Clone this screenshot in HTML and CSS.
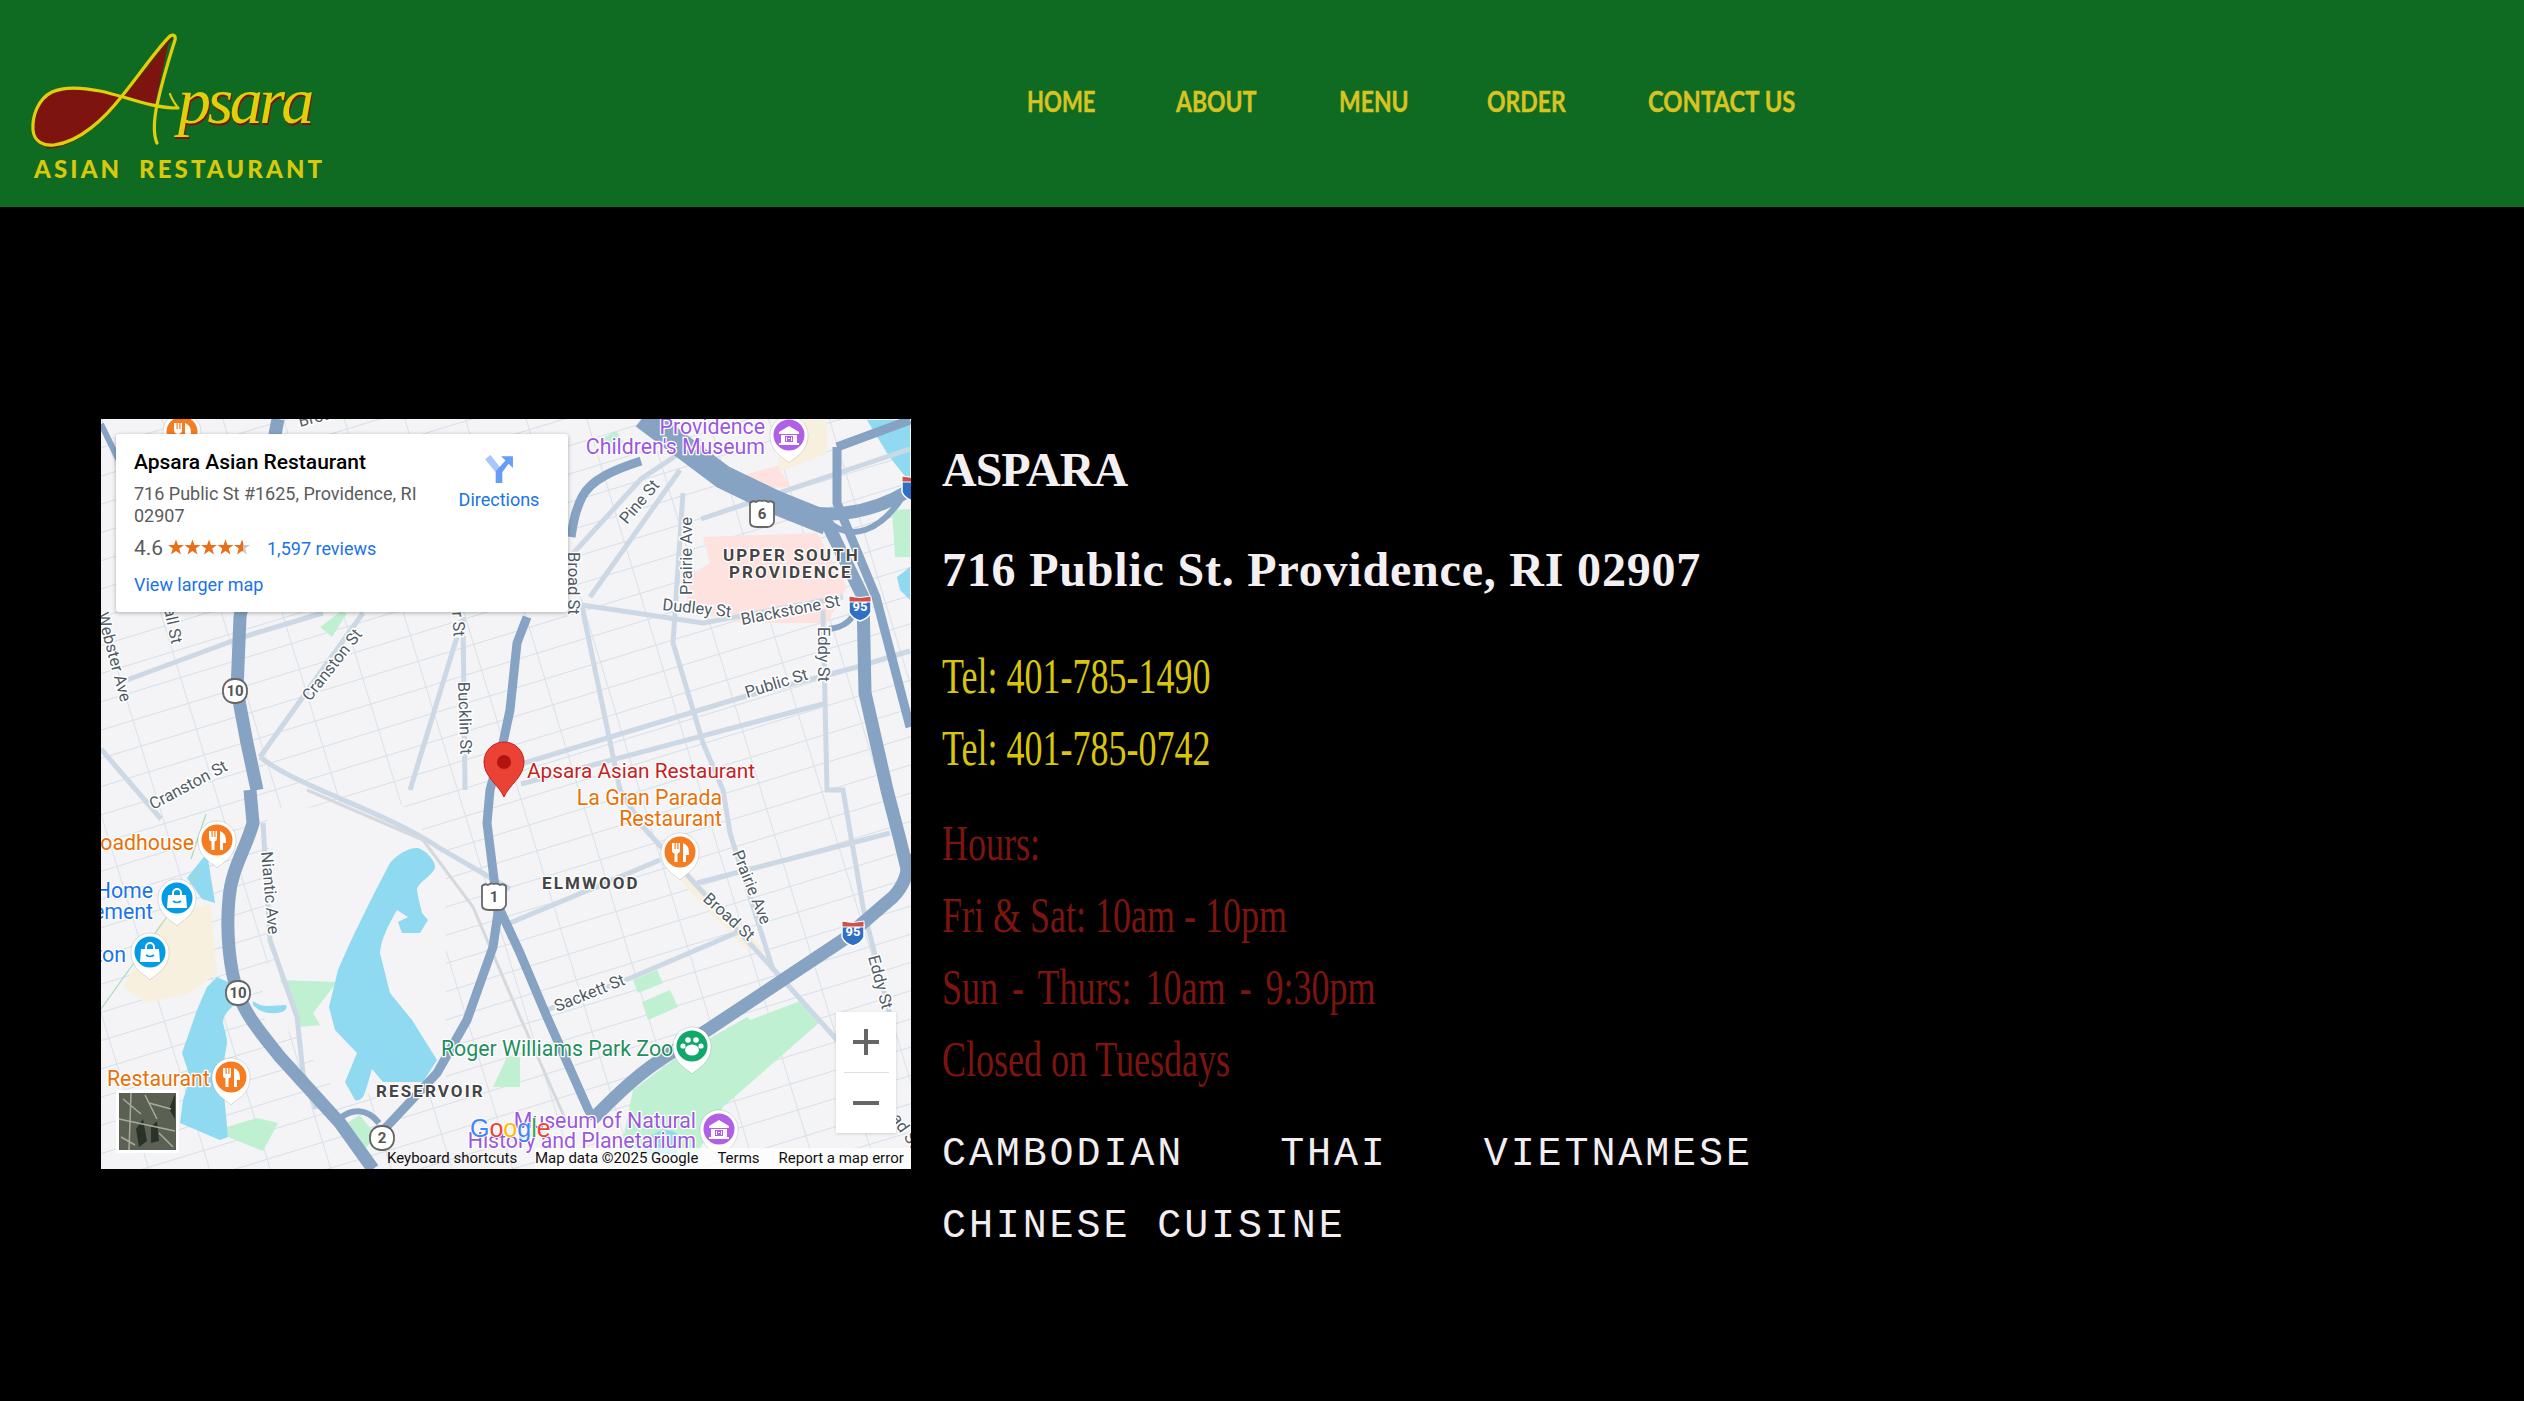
FILE: index.html
```html
<!DOCTYPE html>
<html lang="en">
<head>
<meta charset="utf-8">
<title>Apsara Asian Restaurant</title>
<link rel="stylesheet" href="styles.css">
</head>
<body>
<header class="site-header">
  <a class="logo" href="#" aria-label="Apsara Asian Restaurant">
    <svg class="logo-svg" viewBox="0 0 400 207" width="400" height="207">
      <path class="logo-fill" d="M122 95 C100 122 72 146 46 146 C36 146 32 136 33 124 C35 103 50 89 72 88 C90 87 106 91 122 95Z"/>
      <path class="logo-fill" d="M122 95 L170 36 L155 105Z"/>
      <path class="logo-shadow" d="M46 148 C72 148 100 124 123 97 L172 38"/>
      <path class="logo-line" d="M178 108 C150 108 125 96 100 91 C85 88 65 86 52 92 C38 99 32 116 33 130 C34 142 44 146 54 145 C80 142 105 118 122 96 C140 74 156 50 170 36 C174 34 176 36 175 40 C168 62 160 90 156 110 C154 122 153 134 157 143"/>
      <path class="logo-line thin" d="M170 94 C172 100 176 105 178 108"/>
      <text class="logo-word logo-word-shadow" x="179" y="125">psara</text>
      <text class="logo-word" x="178" y="123">psara</text>
      <text class="logo-sub" x="34" y="178">ASIAN</text>
      <text class="logo-sub" x="139" y="178">RESTAURANT</text>
    </svg>
  </a>
  <nav class="nav">
    <a class="nav-link" href="#"><span class="nav-text">HOME</span></a>
    <a class="nav-link" href="#"><span class="nav-text">ABOUT</span></a>
    <a class="nav-link" href="#"><span class="nav-text">MENU</span></a>
    <a class="nav-link" href="#"><span class="nav-text">ORDER</span></a>
    <a class="nav-link" href="#"><span class="nav-text">CONTACT US</span></a>
  </nav>
</header>

<main class="content">
  <section class="map">
    <svg class="map-svg" viewBox="0 0 810 750" width="810" height="750">
      <defs>
        <pattern id="streets" width="58" height="27" patternUnits="userSpaceOnUse" patternTransform="rotate(-17)">
          <path d="M0 0H58M0 0V27" class="minor"/>
        </pattern>
        <linearGradient id="halfstar"><stop offset="55%" stop-color="#e7711b"/><stop offset="55%" stop-color="#c8c8c8"/></linearGradient>
        <g id="fork">
          <path d="M-8 -9v7q0 3 2.500 3.500V10h3V1.500Q0 1 0 -2v-7h-1.500v6h-1.200v-6h-1.600v6h-1.200v-6Z" fill="#fff"/>
          <path d="M3 10V-9q6 2 6 10v2H6v7Z" fill="#fff"/>
        </g>
        <g id="bag">
          <path d="M-9 -3H9L10 10H-10Z" fill="#fff"/>
          <path d="M-4 -3v-2a4 4 0 0 1 8 0v2" fill="none" stroke="#fff" stroke-width="2"/>
          <path d="M-4 3q4 3 8 0" fill="none" stroke="#039be5" stroke-width="1.600"/>
        </g>
        <g id="mus">
          <path d="M-10 -3L0 -9L10 -3V-1H-10ZM-8 0h16v8h2v2h-20v-2h2Z" fill="#fff"/>
          <path d="M-4 1h8v6h-8Z" fill="#b25fe8"/>
          <path d="M-3 2h1v4h-1ZM2 2h1v4h-1ZM-1 3h2v1h-2Z" fill="#fff"/>
        </g>
        <g id="paw">
          <ellipse cx="0" cy="4" rx="7" ry="5.500" fill="#fff"/>
          <circle cx="-9" cy="0" r="2.600" fill="#fff"/><circle cx="9" cy="0" r="2.600" fill="#fff"/>
          <circle cx="-4" cy="-6" r="2.800" fill="#fff"/><circle cx="4" cy="-6" r="2.800" fill="#fff"/>
        </g>
        <path id="pinbase" class="pin-white" d="M0 28C-4 23 -19 18 -19 0A19 19 0 0 1 19 0C19 18 4 23 0 28Z"/>
        <g id="shield"><rect x="-12" y="-12" width="24" height="24" rx="11" class="shield"/></g>
        <path id="ushield" class="shield" d="M-12 -11q3 -3 6 -1q3 -2 6 -1q3 -1 6 1q3 -2 6 1V8q-2 5 -7 5H-5q-7 0 -7 -5Z"/>
        <g id="interstate">
          <path d="M-11 -7H11V5Q9 11 0 14Q-9 11 -11 5Z" fill="#2f6fc4" stroke="#fff" stroke-width="1.500"/>
          <path d="M-11 -11Q0 -8 11 -11V-5H-11Z" fill="#d1504b" stroke="#fff" stroke-width="1"/>
        </g>
      </defs>

      <rect width="810" height="750" class="land"/>
      <rect width="810" height="750" fill="url(#streets)"/>
      <path class="land" d="M165 390L300 385L345 440L345 660L240 680L190 610L175 520Z"/>
      <path class="land" d="M160 545L225 545L225 600L165 620Z"/>

      <path class="tan" d="M109 484L116 554L89 574L46 584L22 568L59 504Z"/>
      <path class="tan" d="M682 1H726V34L676 54Z"/>
      <path class="tan" d="M569 451L585 450L666 534L642 528Z"/>
      <path class="pink" d="M602 118L716 114L746 168L726 204L642 204L586 191V158L609 144Z"/>
      <path class="pink" d="M646 55L676 47L690 68L650 70Z"/>

      <path class="park" d="M179 561L236 563L212 594L219 606L197 608L189 578Z"/>
      <path class="park" d="M126 708L156 699L177 704L162 732L127 718Z"/>
      <path class="park" d="M246 704L259 696L276 718L262 731Z"/>
      <path class="park" d="M576 638L646 598L649 601L702 581L719 603L622 688L596 735H519L532 671Z"/>
      <path class="park" d="M532 561L556 551L562 564L537 574Z"/>
      <path class="park" d="M541 583L569 571L577 588L547 601Z"/>
      <path class="park" d="M406 638H419V668H392Z"/>
      <path class="park" d="M219 208L239 193L246 194L231 218Z"/>
      <path class="park" d="M791 91L809 90V138L794 138Z"/>
      <path class="park" d="M500 20L515 12L525 26L510 36Z"/>

      <path class="water" d="M316 429C324 430 335 442 334 449C330 458 316 464 316 471C317 480 320 488 321 494L327 501L319 514L301 514L297 503L307 498L296 491C288 505 280 520 279 534L289 574L311 601L336 641L322 663H282L271 650C268 660 265 672 262 678C258 682 256 682 254 681L244 663L256 634L234 611L228 588L237 551C250 520 270 480 289 444C296 436 306 429 316 429Z"/>
      <path class="water" d="M106 434L114 484L101 480L86 459Z"/>
      <path class="water" d="M116 558L129 564L136 584C128 590 122 596 122 604C124 612 126 618 126 624L121 654L127 718L119 721L79 704L82 681L89 658L81 634L96 591L106 568Z"/>
      <path class="water" d="M152 582C162 590 172 586 185 586C188 592 178 595 170 594C162 594 156 590 152 586Z"/>
      <path class="water" d="M766 1H809V64C800 52 790 40 786 34Z"/>
      <path class="water" d="M796 158L809 148V181L799 171Z"/>
      <path class="water" d="M545 722C555 708 575 708 580 720L575 735H540Z"/>

      <g class="street">
        <path d="M481 188L519 371L542 408L676 554L736 621"/>
        <path d="M489 178L579 51"/>
        <path d="M582 74L572 224L602 324L622 371L629 414L672 551"/>
        <path d="M467 184L602 204L742 178"/>
        <path d="M420 345L642 278L756 248L809 232"/>
        <path d="M420 365L726 284"/>
        <path d="M722 191L726 371L742 371L762 488L790 600"/>
        <path d="M262 194L159 338"/>
        <path d="M356 218L309 371"/>
        <path d="M362 198L364 371"/>
        <path d="M26 261L142 218L222 194"/>
        <path d="M0 330L60 400"/>
        <path d="M162 404L169 521L196 598L202 654L215 690"/>
        <path d="M409 504L559 441"/>
        <path d="M596 464L789 414"/>
        <path d="M446 591L532 558L642 511"/>
        <path d="M159 338C200 370 280 390 340 430L409 470"/>
        <path d="M467 140L540 60L600 20"/>
        <path d="M809 30L600 100"/>
      </g>
      <path class="rail" d="M206 371L322 421L372 488L419 598L466 704"/>
      <path class="trail" d="M90 440L105 395M100 450L0 590"/>

      <g class="hwy">
        <path class="hwy-md" d="M177 0L139 198L136 271L146 324L156 371"/>
        <path class="hwy-md" d="M149 371L152 404C145 430 130 450 128 480C125 510 128 550 137 574C145 598 165 620 179 638L239 704L272 750"/>
        <path class="hwy-sm" d="M238 700C250 690 265 688 278 704"/>
        <path class="hwy-sm" d="M0 5L18 42"/>
        <path d="M540 42C515 50 490 60 481 78C474 92 472 105 470 118"/>
        <path d="M426 198L416 224L409 291L402 324L389 371L386 404L394 468L397 494"/>
        <path d="M397 494L392 528L366 601L336 654L292 701L276 718"/>
        <path d="M399 491L419 534L446 598L486 688L492 700"/>
        <path class="hwy-md" d="M492 700C540 650 560 640 602 614L742 521L792 478C805 465 808 450 807 435"/>
        <path class="hwy-lg" d="M542 -2L622 58L676 84L726 104"/>
        <path class="hwy-md" d="M676 84C720 104 770 95 809 71"/>
        <path class="hwy-md" d="M726 104L762 178L764 274L786 371L799 421L807 454"/>
        <path d="M736 28L809 1"/>
        <path d="M736 28L736 84L775 178L809 308"/>
        <path class="hwy-sm" d="M726 101C750 125 780 110 800 80"/>
        <path class="hwy-sm" d="M728 210C745 208 752 200 755 190"/>
      </g>

      <text class="lb" transform="translate(199 8) rotate(-15)">Broad</text>
      <text class="lb" transform="translate(-4 195) rotate(75)">Webster Ave</text>
      <text class="lb" transform="translate(60 176) rotate(78)">Wall St</text>
      <text class="lb" transform="translate(351 193) rotate(86)">r St</text>
      <text class="lb" transform="translate(209 283) rotate(-52)">Cranston St</text>
      <text class="lb" transform="translate(52 391) rotate(-28)">Cranston St</text>
      <text class="lb" transform="translate(357 263) rotate(88)">Bucklin St</text>
      <text class="lb" transform="translate(160 433) rotate(85)">Niantic Ave</text>
      <text class="lb" transform="translate(467 133) rotate(90)">Broad St</text>
      <text class="lb" transform="translate(526 106) rotate(-50)">Pine St</text>
      <text class="lb" transform="translate(591 176) rotate(-90)">Prairie Ave</text>
      <text class="lb" transform="translate(561 191) rotate(6)">Dudley St</text>
      <text class="lb" transform="translate(641 206) rotate(-11)">Blackstone St</text>
      <text class="lb" transform="translate(646 279) rotate(-17)">Public St</text>
      <text class="lb" transform="translate(717 208) rotate(90)">Eddy St</text>
      <text class="lb" transform="translate(767 538) rotate(75)">Eddy St</text>
      <text class="lb" transform="translate(601 481) rotate(42)">Broad St</text>
      <text class="lb" transform="translate(631 434) rotate(68)">Prairie Ave</text>
      <text class="lb" transform="translate(456 593) rotate(-22)">Sackett St</text>
      <text class="lb" transform="translate(775 679) rotate(55)">Broad St</text>

      <text class="area" x="622" y="142">UPPER SOUTH</text>
      <text class="area" x="628" y="159">PROVIDENCE</text>
      <text class="area" x="441" y="470">ELMWOOD</text>
      <text class="area" x="275" y="678">RESERVOIR</text>

      <use href="#shield" x="134" y="272"/><text class="num" x="134" y="277">10</text>
      <use href="#shield" x="137" y="574"/><text class="num" x="137" y="579">10</text>
      <use href="#shield" x="281" y="719"/><text class="num" x="281" y="724">2</text>
      <use href="#ushield" x="393" y="478"/><text class="num" x="393" y="483">1</text>
      <use href="#ushield" x="661" y="95"/><text class="num" x="661" y="100">6</text>
      <use href="#interstate" x="759" y="188"/><text class="num-w" x="759" y="192">95</text>
      <use href="#interstate" x="752" y="513"/><text class="num-w" x="752" y="517">95</text>
      <use href="#interstate" x="812" y="68"/>

      <text class="poi-l or" text-anchor="end" x="93" y="431">Roadhouse</text>
      <text class="poi-l bl" text-anchor="end" x="52" y="479">Home</text>
      <text class="poi-l bl" text-anchor="end" x="52" y="500">Improvement</text>
      <text class="poi-l bl" text-anchor="end" x="25" y="543">Boston</text>
      <text class="poi-l or" x="6" y="667">Restaurant</text>
      <text class="poi-l or" text-anchor="end" x="621" y="386">La Gran Parada</text>
      <text class="poi-l or" text-anchor="end" x="621" y="407">Restaurant</text>
      <text class="poi-l gr" x="340" y="637">Roger Williams Park Zoo</text>
      <text class="poi-l pu" text-anchor="end" x="664" y="15">Providence</text>
      <text class="poi-l pu" text-anchor="end" x="664" y="35">Children's Museum</text>
      <text class="poi-l pu" text-anchor="end" x="595" y="709">Museum of Natural</text>
      <text class="poi-l pu" text-anchor="end" x="595" y="729">History and Planetarium</text>
      <text class="poi-l rd" x="426" y="359">Apsara Asian Restaurant</text>

      <g transform="translate(81 13)"><use href="#pinbase"/><circle r="15.500" class="c-or"/><use href="#fork"/></g>
      <g transform="translate(116 421)"><use href="#pinbase"/><circle r="15.500" class="c-or"/><use href="#fork"/></g>
      <g transform="translate(130 658)"><use href="#pinbase"/><circle r="15.500" class="c-or"/><use href="#fork"/></g>
      <g transform="translate(579 433)"><use href="#pinbase"/><circle r="15.500" class="c-or"/><use href="#fork"/></g>
      <g transform="translate(76 479)"><use href="#pinbase"/><circle r="15.500" class="c-bl"/><use href="#bag"/></g>
      <g transform="translate(49 533)"><use href="#pinbase"/><circle r="15.500" class="c-bl"/><use href="#bag"/></g>
      <g transform="translate(688 16)"><use href="#pinbase"/><circle r="15.500" class="c-pu"/><use href="#mus"/></g>
      <g transform="translate(618 710)"><use href="#pinbase"/><circle r="15.500" class="c-pu"/><use href="#mus"/></g>
      <g transform="translate(591 627)"><use href="#pinbase"/><circle r="15.500" class="c-gr"/><use href="#paw"/></g>

      <path class="marker" d="M403 378C398 366 383 358 383 343A20 20 0 0 1 423 343C423 358 408 366 403 378Z"/>
      <circle class="marker-dot" cx="403" cy="343" r="7"/>

      <text class="glogo" x="369" y="718"><tspan class="g-b">G</tspan><tspan class="g-r">o</tspan><tspan class="g-y">o</tspan><tspan class="g-b">g</tspan><tspan class="g-g">l</tspan><tspan class="g-r">e</tspan></text>

      <g class="thumb">
        <rect x="15" y="671" width="63" height="63" rx="2" class="thumb-frame"/>
        <rect x="18" y="674" width="57" height="57" class="thumb-sat"/>
        <path class="thumb-dark" d="M74 675V700L68 690ZM35 710L42 700L46 722L38 728ZM50 708L56 702L58 722L50 724Z"/>
        <path class="thumb-light" d="M22 680L40 695M30 674L28 731M44 676L56 700M18 700L74 712M58 714L72 728M20 718L34 726M48 684L70 690"/>
      </g>
    </svg>

    <div class="card">
      <div class="card-main">
        <div class="card-title">Apsara Asian Restaurant</div>
        <div class="card-addr">716 Public St #1625, Providence, RI 02907</div>
        <div class="card-rating">
          <span class="rating-num">4.6</span>
          <svg class="stars" viewBox="0 0 84 16" width="84" height="16">
            <path id="st" class="star" d="M8 0.500L10 6H16L11.200 9.500L13 15.500L8 12L3 15.500L4.800 9.500L0 6H6Z"/>
            <use href="#st" x="16.500"/><use href="#st" x="33"/><use href="#st" x="49.500"/>
            <path class="star-half" transform="translate(66 0)" d="M8 0.500L10 6H16L11.200 9.500L13 15.500L8 12L3 15.500L4.800 9.500L0 6H6Z"/>
          </svg>
          <a class="card-link reviews" href="#">1,597 reviews</a>
        </div>
        <a class="card-link larger" href="#">View larger map</a>
      </div>
      <div class="card-dir">
        <svg viewBox="0 0 28 28" width="30" height="30">
          <path class="dir-light" d="M1 5L6 1L17 15V27H11V17Z"/>
          <path class="dir-dark" d="M11 27V16L20 6L16 2H27V13L23 9L17 17V27Z"/>
        </svg>
        <a class="card-link" href="#">Directions</a>
      </div>
    </div>

    <div class="zoom-ctl">
      <button class="zoom-btn" aria-label="Zoom in"><svg viewBox="0 0 26 26" width="26" height="26"><path class="zoom-ic" d="M13 0V26M0 13H26"/></svg></button>
      <span class="zoom-div"></span>
      <button class="zoom-btn" aria-label="Zoom out"><svg viewBox="0 0 26 26" width="26" height="26"><path class="zoom-ic" d="M0 13H26"/></svg></button>
    </div>

    <div class="map-foot">
      <span class="foot-item kb">Keyboard shortcuts</span>
      <span class="foot-bar">
        <span class="foot-item">Map data ©2025 Google</span>
        <span class="foot-item">Terms</span>
        <span class="foot-item">Report a map error</span>
      </span>
    </div>
  </section>

  <section class="info">
    <h1 class="name">ASPARA</h1>
    <h2 class="address">716 Public St. Providence, RI 02907</h2>
    <p class="cond tel">Tel: 401-785-1490</p>
    <p class="cond tel">Tel: 401-785-0742</p>
    <p class="cond hours first">Hours:</p>
    <p class="cond hours">Fri &amp; Sat: 10am - 10pm</p>
    <p class="cond hours wide">Sun - Thurs: 10am - 9:30pm</p>
    <p class="cond hours">Closed on Tuesdays</p>
    <p class="cuisine first"><span>CAMBODIAN</span><span>THAI</span><span>VIETNAMESE</span></p>
    <p class="cuisine">CHINESE CUISINE</p>
  </section>
</main>
</body>
</html>
```

FILE: styles.css
```css
* { box-sizing: border-box; }
html, body { margin: 0; padding: 0; }
body { background: #000; min-height: 1401px; overflow: hidden; font-family: "Liberation Serif", serif; }

.site-header { height: 207px; background: #0f6b22; display: flex; align-items: flex-start; }
.logo { display: block; width: 400px; height: 207px; flex: none; }
.logo-svg { display: block; }
.logo-fill { fill: #7d1410; }
.logo-shadow { fill: none; stroke: #5a2a10; stroke-width: 2; }
.logo-line { fill: none; stroke: #e0cf0a; stroke-width: 3.200; stroke-linecap: round; stroke-linejoin: round; }
.logo-line.thin { stroke-width: 2.200; }
.logo-word { font-family: "Liberation Serif", serif; font-style: italic; font-size: 66px; letter-spacing: -3.500px; fill: #e0cf0a; }
.logo-word-shadow { fill: #7d1410; }
.logo-sub { font-family: Lato, sans-serif; font-weight: 900; font-size: 24px; letter-spacing: 3.100px; fill: #d9c80c; }

.nav { display: grid; grid-template-columns: 68px 82px 67px 80px 148px; column-gap: 81px; margin-left: 627px; padding-top: 84px; }
.nav-link { color: #d8c322; text-decoration: none; display: block; }
.nav-text { display: inline-block; font-family: Lato, sans-serif; font-weight: 700; font-size: 28px; line-height: 34px; white-space: nowrap; -webkit-text-stroke: .4px #d8c322; transform: scaleX(.82); transform-origin: left center; }
.nav-link:first-child .nav-text { transform: scaleX(.79); }
.nav-link:last-child .nav-text { transform: scaleX(.85); }

.content { display: flex; align-items: flex-start; gap: 31px; padding: 212px 0 0 101px; }

.map { position: relative; width: 810px; height: 750px; flex: none; overflow: hidden; font-family: Roboto, sans-serif; background: #f4f3f5; }
.map-svg { display: block; }
.land { fill: #f4f3f5; }
.minor { fill: none; stroke: #d6e0e8; stroke-width: 1.800; }
.tan { fill: #f7f0de; }
.pink { fill: #fde2e0; }
.park { fill: #c0f0d2; }
.water { fill: #8fdaf0; }
.street path { fill: none; stroke: #ccd9e4; stroke-width: 5; }
.rail { fill: none; stroke: #d5d8dc; stroke-width: 3; }
.trail { fill: none; stroke: #a8dcb8; stroke-width: 1.200; }
.hwy path { fill: none; stroke: #86a3c3; stroke-width: 9; stroke-linejoin: round; }
.hwy .hwy-sm { stroke-width: 6; }
.hwy .hwy-md { stroke-width: 13; }
.hwy .hwy-lg { stroke-width: 24; }

.lb { font-size: 16.500px; fill: #4f5b66; paint-order: stroke; stroke: #fff; stroke-width: 3px; }
.area { font-size: 17px; font-weight: 700; letter-spacing: 2.100px; fill: #444; paint-order: stroke; stroke: #fff; stroke-width: 2.500px; }
.num { font-size: 15px; font-weight: 700; text-anchor: middle; fill: #555; }
.num-w { font-size: 13px; font-weight: 700; text-anchor: middle; fill: #fff; }
.shield { fill: #fff; stroke: #666; stroke-width: 1.800; }
.poi-l { font-size: 21.300px; paint-order: stroke; stroke: #fff; stroke-width: 2.500px; }
.or { fill: #e8710a; }
.bl { fill: #1a73e8; }
.gr { fill: #1e8e5e; }
.pu { fill: #9a58e0; }
.rd { fill: #c5221f; font-size: 20.800px; }
.pin-white { fill: #fff; stroke: rgba(0,0,0,.12); }
.c-or { fill: #f57c20; }
.c-bl { fill: #039be5; }
.c-pu { fill: #b25fe8; }
.c-gr { fill: #12a86b; }
.marker { fill: #ea4335; stroke: #c5221f; stroke-width: 1; }
.marker-dot { fill: #b3140f; }
.glogo { font-family: "Liberation Sans", sans-serif; font-size: 25px; paint-order: stroke; stroke: #fff; stroke-width: 1.500px; }
.g-b { fill: #4285f4; }
.g-r { fill: #ea4335; }
.g-y { fill: #fbbc05; }
.g-g { fill: #34a853; }
.thumb-frame { fill: #fff; }
.thumb-sat { fill: #5b6152; }
.thumb-dark { fill: #2a3128; }
.thumb-light { fill: none; stroke: #a9aa9c; stroke-width: 1.500; }

.card { position: absolute; left: 15px; top: 15px; width: 452px; height: 178px; background: #fff; box-shadow: 0 1px 4px rgba(0,0,0,.3); border-radius: 3px; display: flex; padding: 14px 0 0 18px; }
.card-main { width: 300px; flex: none; }
.card-title { font-size: 21px; line-height: 28px; font-weight: 500; color: #000; }
.card-addr { font-size: 18px; line-height: 22px; color: #5b5b5b; margin-top: 7px; width: 295px; }
.card-rating { display: flex; align-items: center; margin-top: 8px; height: 26px; }
.rating-num { font-size: 21px; color: #5b5b5b; width: 34px; }
.stars { flex: none; margin-right: 15px; margin-top: -3px; }
.star { fill: #e7711b; }
.star-half { fill: url(#halfstar); }
.card-link { font-size: 18px; color: #1a73e8; text-decoration: none; }
.larger { display: block; margin-top: 13px; line-height: 22px; }
.card-dir { display: flex; flex-direction: column; align-items: center; margin-left: 24px; width: 82px; padding-top: 6px; gap: 5px; }

.dir-light { fill: #a8c7fa; }
.dir-dark { fill: #669df6; }

.zoom-ctl { position: absolute; left: 735px; top: 593px; width: 60px; height: 121px; background: #fff; display: flex; flex-direction: column; align-items: center; box-shadow: 0 1px 3px rgba(0,0,0,.15); }
.zoom-btn { border: 0; background: none; padding: 0; height: 60px; width: 60px; display: flex; align-items: center; justify-content: center; }
.zoom-div { width: 45px; height: 1px; background: #e0e0e0; }
.zoom-ic { fill: none; stroke: #666; stroke-width: 4; }

.map-foot { position: absolute; left: 283px; right: 0; bottom: 0; height: 21px; display: flex; font-size: 15px; line-height: 21px; color: #111; }
.foot-item { white-space: nowrap; }
.kb { width: 151px; padding-left: 3px; }
.foot-bar { flex: 1; background: rgba(255,255,255,.72); display: flex; gap: 19px; }

.info { color: #f4eff1; padding-top: 23px; }
.name { margin: 0; font-size: 48px; line-height: 56px; font-weight: 700; letter-spacing: -1px; }
.address { margin: 44px 0 0; font-size: 48px; line-height: 56px; font-weight: 700; letter-spacing: .8px; white-space: nowrap; }
.cond { margin: 0; font-size: 50px; line-height: 72px; white-space: nowrap; transform: scaleX(.72); transform-origin: left center; }
.tel { color: #d8c60a; }
.tel:first-of-type { margin-top: 42px; }
.hours { color: #7d1410; }
.hours.first { margin-top: 23px; }
.wide { word-spacing: 7px; }
.cuisine { margin: 0; font-family: "Liberation Mono", monospace; font-size: 40px; line-height: 72px; letter-spacing: 2.900px; color: #f2eef0; white-space: nowrap; display: flex; gap: 96px; }
.cuisine.first { margin-top: 24px; }
```
